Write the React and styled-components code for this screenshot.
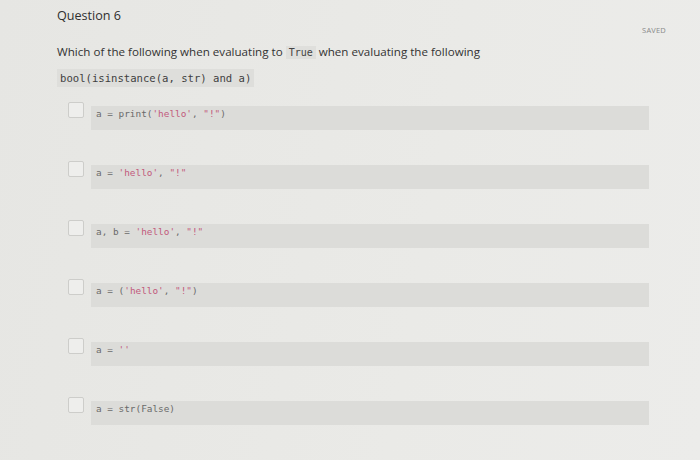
import React from "react";
import styled, { createGlobalStyle } from "styled-components";

const Global = createGlobalStyle`
  html, body { margin: 0; padding: 0; background: #e8e8e5; }
  body { font-family: "Open Sans", "Liberation Sans", sans-serif; color: #333; }
`;

const Page = styled.div`
  width: 700px;
  height: 460px;
  box-sizing: border-box;
  padding: 7px 34px 0 57px;
  background: linear-gradient(100deg, #e6e6e3 0%, #eaeae7 60%, #ececea 100%);
  overflow: hidden;
`;

const Header = styled.div`
  display: flex;
  justify-content: space-between;
  align-items: flex-start;
`;

const Title = styled.h2`
  margin: 0;
  font-size: 12.6px;
  font-weight: 400;
  line-height: 18px;
  color: #2f2f2f;
`;

const Saved = styled.span`
  margin-top: 18px;
  font-size: 7.5px;
  letter-spacing: 0.2px;
  color: #8a8a8a;
`;

const Prompt = styled.p`
  margin: 8px 0 0;
  font-size: 11.6px;
  line-height: 18px;
  color: #333;
`;

const InlineCode = styled.code`
  font-family: "DejaVu Sans Mono", "Liberation Mono", monospace;
  font-size: 10px;
  background: #dfdfdc;
  padding: 1px 3px;
  color: #444;
`;

const CodeBlock = styled.div`
  display: inline-block;
  margin-top: 7px;
  padding: 1px 3px;
  background: #dededb;
  font-family: "DejaVu Sans Mono", "Liberation Mono", monospace;
  font-size: 10.6px;
  line-height: 16px;
  color: #3f3f3f;
`;

const Options = styled.div`
  display: flex;
  flex-direction: column;
  gap: 31px;
  margin: 15px 0 0 11px;
`;

const Row = styled.label`
  display: flex;
  align-items: flex-start;
  gap: 7px;
`;

const Box = styled.span`
  flex: none;
  width: 14px;
  height: 14px;
  border: 1px solid #cdcdca;
  border-radius: 2px;
  background: #eeeeec;
`;

const Bar = styled.div`
  width: 558px;
  height: 24px;
  margin-top: 4px;
  box-sizing: border-box;
  padding: 1px 5px 0;
  background: #dcdcd9;
  font-family: "DejaVu Sans Mono", "Liberation Mono", monospace;
  font-size: 9.4px;
  line-height: 14px;
  color: #6a6a6a;
  white-space: pre;
`;

const Str = styled.span`
  color: #c25a7c;
`;

const options = [
  <>a = print(<Str>'hello'</Str>, <Str>"!"</Str>)</>,
  <>a = <Str>'hello'</Str>, <Str>"!"</Str></>,
  <>a, b = <Str>'hello'</Str>, <Str>"!"</Str></>,
  <>a = (<Str>'hello'</Str>, <Str>"!"</Str>)</>,
  <>a = <Str>''</Str></>,
  <>a = str(False)</>,
];

export default function App() {
  return (
    <Page>
      <Global />
      <Header>
        <Title>Question 6</Title>
        <Saved>SAVED</Saved>
      </Header>
      <Prompt>
        Which of the following when evaluating to <InlineCode>True</InlineCode> when evaluating the following
      </Prompt>
      <CodeBlock>bool(isinstance(a, str) and a)</CodeBlock>
      <Options>
        {options.map((o, i) => (
          <Row key={i}>
            <Box />
            <Bar>{o}</Bar>
          </Row>
        ))}
      </Options>
    </Page>
  );
}
